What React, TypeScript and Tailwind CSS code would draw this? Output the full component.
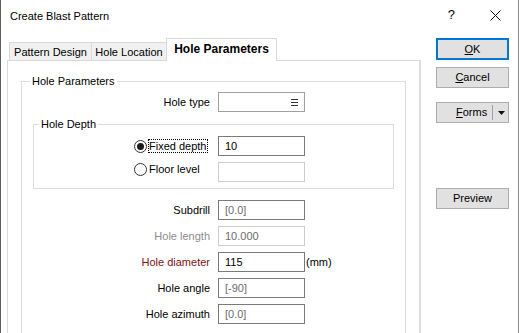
import React from 'react';

const Input = ({ value, muted, disabled, light }: { value?: string; muted?: boolean; disabled?: boolean; light?: boolean }) => (
  <div
    className={`ml-[8px] w-[87px] h-[20px] border bg-white pl-[6px] leading-[18px] ${
      disabled ? 'border-[#cccccc]' : light ? 'border-[#a0a0a0]' : 'border-[#7a7a7a]'
    } ${muted || disabled ? 'text-[#6d6d6d]' : 'text-black'}`}
  >
    {value}
  </div>
);

const Row = ({ label, value, labelClass, muted, disabled, unit }: {
  label: string; value: string; labelClass?: string; muted?: boolean; disabled?: boolean; unit?: string;
}) => (
  <div className="flex items-center h-[20px] mt-[6px] first:mt-0">
    <div className={`w-[188px] text-right ${labelClass ?? 'text-black'}`}>{label}</div>
    <Input value={value} muted={muted} disabled={disabled} />
    {unit && <span className="ml-[1px]">{unit}</span>}
  </div>
);

const Radio = ({ checked }: { checked?: boolean }) => (
  <div className="w-[13px] h-[13px] rounded-full border border-[#333333] bg-white flex items-center justify-center">
    {checked && <div className="w-[7px] h-[7px] rounded-full bg-[#1a1a1a]" />}
  </div>
);

const Button = ({ children, primary, className }: { children: React.ReactNode; primary?: boolean; className?: string }) => (
  <div
    className={`w-[73px] flex items-center justify-center bg-[#e1e1e1] ${
      primary ? 'border-2 border-[#0078d7] h-[22px]' : 'border border-[#adadad] h-[21px]'
    } ${className ?? ''}`}
  >
    {children}
  </div>
);

export default function App() {
  return (
    <div className="w-[519px] h-[333px] overflow-hidden bg-white border-l border-l-[#5f5f5f] border-r border-r-[#8a8a8a] text-[11px] text-black font-['Liberation_Sans',Arial,sans-serif]">
      {/* Title bar */}
      <div className="h-[38px] flex items-start pl-[9px] pt-[9px] leading-[14px]">
        <span>Create Blast Pattern</span>
        <span className="ml-auto text-[13px] leading-[14px] mt-[-1px]">?</span>
        <svg className="ml-[35px] mr-[17px] mt-[1px]" width="11" height="11" viewBox="0 0 11 11">
          <path d="M0.5 0.5 L10.5 10.5 M10.5 0.5 L0.5 10.5" stroke="#111" strokeWidth="1" />
        </svg>
      </div>

      <div className="flex pl-[6px]">
        {/* Tabs + panel */}
        <div className="w-[414px] flex flex-col">
          <div className="h-[22px] flex items-end pl-[2px]">
            <div className="h-[18px] w-[82px] border-l border-t border-[#d9d9d9] bg-[#f0f0f0] flex items-center justify-center leading-[14px]">
              Pattern Design
            </div>
            <div className="h-[18px] w-[75px] border-l border-t border-[#d9d9d9] bg-[#f0f0f0] flex items-center justify-center leading-[14px]">
              Hole Location
            </div>
            <div className="relative z-10 -mb-px h-[23px] w-[111px] border-l border-t border-r border-[#d9d9d9] bg-white flex items-start justify-center pt-[3px] font-bold text-[12px] leading-[14px]">
              Hole Parameters
            </div>
          </div>

          <div className="h-[300px] border-t border-l border-[#d9d9d9] border-r-2 border-r-[#dedede] bg-white px-[13px] pt-[13px] leading-[20px]">
            <fieldset className="border border-[#dcdcdc] w-[385px] p-0 m-0">
              <legend className="ml-[8px] px-[2px] leading-[14px]">Hole Parameters</legend>
              <div className="pb-[40px]">
                <div className="flex items-center h-[20px] mt-[4px]">
                  <div className="w-[188px] text-right">Hole type</div>
                  <div className="ml-[8px] w-[87px] h-[20px] border border-[#a0a0a0] bg-white flex items-center justify-end pr-[6px]">
                    <svg width="7" height="7" viewBox="0 0 7 7">
                      <path d="M0 0.5 H7 M0 3.5 H7 M0 6.5 H7" stroke="#333" strokeWidth="1" />
                    </svg>
                  </div>
                </div>

                <fieldset className="mt-[5px] ml-[11px] w-[361px] border border-[#dcdcdc] p-0">
                  <legend className="ml-[5px] px-[2px] leading-[14px]">Hole Depth</legend>
                  <div className="pt-[5px] pb-[6px]">
                    <div className="flex items-center h-[20px]">
                      <div className="w-[184px] flex items-center pl-[100px]">
                        <Radio checked />
                        <span className="ml-[1px] border border-dotted border-black leading-[12px] pr-[1px]">Fixed depth</span>
                      </div>
                      <div className="w-[87px] h-[20px] border border-[#7a7a7a] pl-[6px] leading-[18px]">10</div>
                    </div>
                    <div className="flex items-center h-[20px] mt-[6px]">
                      <div className="w-[184px] flex items-center pl-[100px] mb-[6px]">
                        <Radio />
                        <span className="ml-[2px] leading-[12px]">Floor level</span>
                      </div>
                      <div className="w-[87px] h-[20px] border border-[#cccccc]" />
                    </div>
                  </div>
                </fieldset>

                <div className="mt-[11px]">
                  <Row label="Subdrill" value="[0.0]" muted />
                  <Row label="Hole length" value="10.000" disabled labelClass="text-[#8c8c8c]" />
                  <Row label="Hole diameter" value="115" labelClass="text-[#7a1212]" unit="(mm)" />
                  <Row label="Hole angle" value="[-90]" muted />
                  <Row label="Hole azimuth" value="[0.0]" muted />
                </div>
              </div>
            </fieldset>
          </div>
        </div>

        {/* Right buttons */}
        <div className="ml-[15px] flex flex-col">
          <Button primary>
            <span><span className="underline">O</span>K</span>
          </Button>
          <Button className="mt-[7px]">
            <span><span className="underline">C</span>ancel</span>
          </Button>
          <Button className="mt-[14px] !justify-start">
            <span className="ml-[19px] w-[36px]"><span className="underline">F</span>orms</span>
            <span className="h-[15px] border-l border-[#a0a0a0]" />
            <svg className="ml-[5px]" width="7" height="4" viewBox="0 0 7 4">
              <path d="M0 0 H7 L3.5 4 Z" fill="#111" />
            </svg>
          </Button>
          <Button className="mt-[65px]">Preview</Button>
        </div>
      </div>
    </div>
  );
}
